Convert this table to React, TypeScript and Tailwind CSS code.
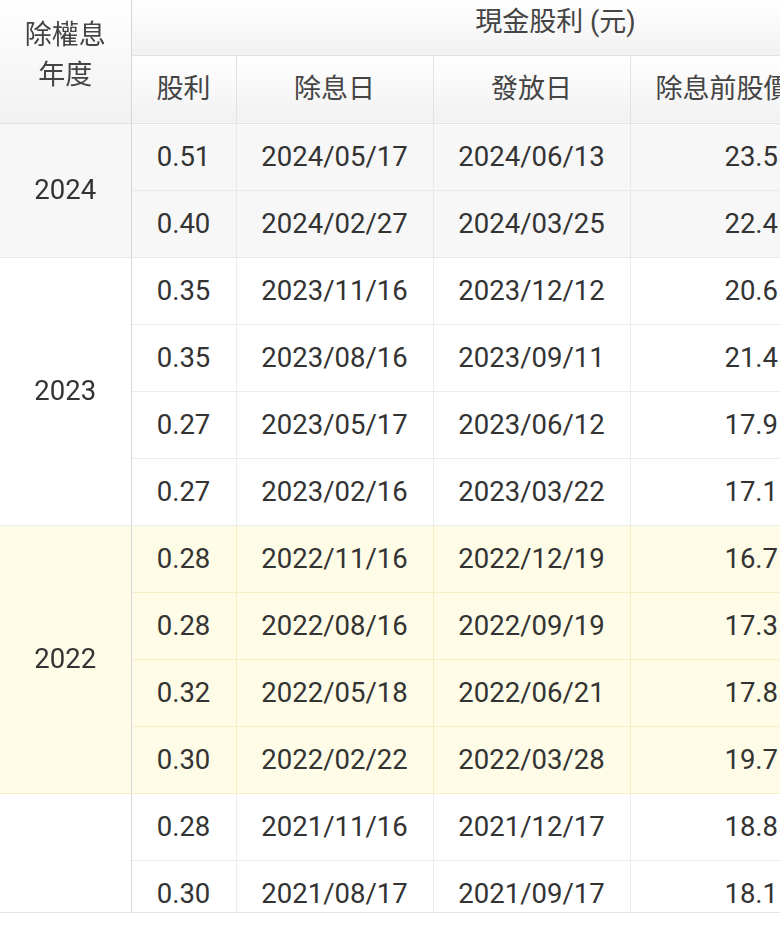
type Row = [string, string, string, string, string];

type Group = {
  year: string;
  tone: "gray" | "white" | "yellow";
  rows: Row[];
};

const groups: Group[] = [
  {
    year: "2024",
    tone: "gray",
    rows: [
      ["0.51", "2024/05/17", "2024/06/13", "23.55", "5"],
      ["0.40", "2024/02/27", "2024/03/25", "22.45", "3"],
    ],
  },
  {
    year: "2023",
    tone: "white",
    rows: [
      ["0.35", "2023/11/16", "2023/12/12", "20.65", "7"],
      ["0.35", "2023/08/16", "2023/09/11", "21.45", "12"],
      ["0.27", "2023/05/17", "2023/06/12", "17.95", "2"],
      ["0.27", "2023/02/16", "2023/03/22", "17.15", "4"],
    ],
  },
  {
    year: "2022",
    tone: "yellow",
    rows: [
      ["0.28", "2022/11/16", "2022/12/19", "16.75", "9"],
      ["0.28", "2022/08/16", "2022/09/19", "17.35", "6"],
      ["0.32", "2022/05/18", "2022/06/21", "17.85", "15"],
      ["0.30", "2022/02/22", "2022/03/28", "19.75", "8"],
    ],
  },
  {
    year: "2021",
    tone: "white",
    rows: [
      ["0.28", "2021/11/16", "2021/12/17", "18.85", "3"],
      ["0.30", "2021/08/17", "2021/09/17", "18.15", "5"],
      ["0.30", "2021/05/18", "2021/06/17", "18.25", "4"],
      ["0.28", "2021/02/17", "2021/03/16", "17.95", "6"],
    ],
  },
];

const toneBg = {
  gray: "bg-[#f7f7f7]",
  white: "bg-white",
  yellow: "bg-[#fefbe6]",
};

const toneBorder = {
  gray: "border-[#e9e9e9]",
  white: "border-[#ececec]",
  yellow: "border-[#f6edc6]",
};

const headCell =
  "border border-[#e2e2e2] bg-gradient-to-b from-white to-[#f1f1f1] font-normal text-[#444]";

export default function App() {
  return (
    <div
      className="h-[913px] w-[780px] overflow-hidden border-b border-[#e4e4e4] bg-white text-[#333]"
      style={{ fontFamily: 'Roboto, "Noto Sans CJK TC", sans-serif' }}
    >
      <table className="w-[980px] table-fixed border-collapse">
        <colgroup>
          <col className="w-[131px]" />
          <col className="w-[105px]" />
          <col className="w-[197px]" />
          <col className="w-[197px]" />
          <col className="w-[182px]" />
          <col className="w-[168px]" />
        </colgroup>
        <thead>
          <tr className="h-[55px]">
            <th
              rowSpan={2}
              className={`${headCell} sticky left-0 z-10 border-l-0 border-t-0 border-r-[#d6d6d6] text-[27px] leading-[40px] shadow-[3px_0_3px_rgba(0,0,0,0.07)]`}
            >
              <div className="-mt-[12px]">
                除權息
                <br />
                年度
              </div>
            </th>
            <th colSpan={5} className={`${headCell} border-t-0 pb-[10px] text-[27px]`}>
              現金股利 (元)
            </th>
          </tr>
          <tr className="h-[68px] text-[27px]">
            <th className={headCell}>股利</th>
            <th className={headCell}>除息日</th>
            <th className={headCell}>發放日</th>
            <th className={`${headCell} text-left pl-[25px]`}>除息前股價</th>
            <th className={headCell}>填息花費日數</th>
          </tr>
        </thead>
        <tbody className="text-[27.5px]">
          {groups.map((g) =>
            g.rows.map((r, i) => (
              <tr key={g.year + r[1]} className={`h-[67px] ${toneBg[g.tone]}`}>
                {i === 0 && (
                  <td
                    rowSpan={g.rows.length}
                    className={`sticky left-0 z-10 border border-l-0 border-r-[#d6d6d6] text-center ${toneBg[g.tone]} ${toneBorder[g.tone]} shadow-[3px_0_3px_rgba(0,0,0,0.07)]`}
                  >
                    {g.year}
                  </td>
                )}
                <td className={`border text-center ${toneBorder[g.tone]}`}>{r[0]}</td>
                <td className={`border text-center ${toneBorder[g.tone]}`}>{r[1]}</td>
                <td className={`border text-center ${toneBorder[g.tone]}`}>{r[2]}</td>
                <td className={`border pr-[18px] text-right ${toneBorder[g.tone]}`}>{r[3]}</td>
                <td className={`border text-center ${toneBorder[g.tone]}`}>{r[4]}</td>
              </tr>
            ))
          )}
        </tbody>
      </table>
    </div>
  );
}
